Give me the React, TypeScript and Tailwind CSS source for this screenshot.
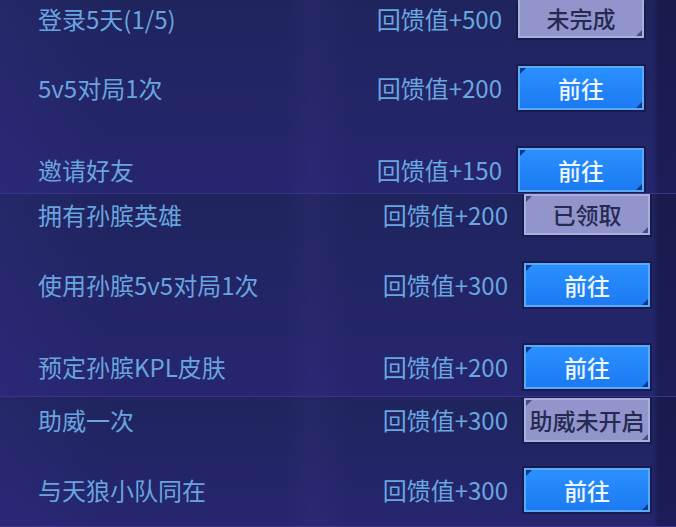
import React from 'react';

type Task = {
  label: string;
  reward: string;
  action: string;
  active: boolean;
  offset: string;
  size: string;
  cropTop?: boolean;
};

type Section = {
  height: string;
  rightPad: string;
  tasks: Task[];
};

const sections: Section[] = [
  {
    height: 'h-[194px]',
    rightPad: 'pr-[32px]',
    tasks: [
      { label: '登录5天(1/5)', reward: '回馈值+500', action: '未完成', active: false, offset: 'mt-0', size: 'h-[38px]', cropTop: true },
      { label: '5v5对局1次', reward: '回馈值+200', action: '前往', active: true, offset: 'mt-[28px]', size: 'h-[44px]' },
      { label: '邀请好友', reward: '回馈值+150', action: '前往', active: true, offset: 'mt-[38px]', size: 'h-[44px]' },
    ],
  },
  {
    height: 'h-[203px]',
    rightPad: 'pr-[26px]',
    tasks: [
      { label: '拥有孙膑英雄', reward: '回馈值+200', action: '已领取', active: false, offset: 'mt-0', size: 'h-[41px]' },
      { label: '使用孙膑5v5对局1次', reward: '回馈值+300', action: '前往', active: true, offset: 'mt-[28px]', size: 'h-[44px]' },
      { label: '预定孙膑KPL皮肤', reward: '回馈值+200', action: '前往', active: true, offset: 'mt-[38px]', size: 'h-[44px]' },
    ],
  },
  {
    height: 'h-[130px]',
    rightPad: 'pr-[26px]',
    tasks: [
      { label: '助威一次', reward: '回馈值+300', action: '助威未开启', active: false, offset: 'mt-[1px]', size: 'h-[44px]' },
      { label: '与天狼小队同在', reward: '回馈值+300', action: '前往', active: true, offset: 'mt-[26px]', size: 'h-[44px]' },
    ],
  },
];

function ActionButton({ text, active, size, cropTop }: { text: string; active: boolean; size: string; cropTop?: boolean }) {
  const tri = active ? 'border-t-[#0c3585]' : 'border-t-[#474c84]';
  const triB = active ? 'border-b-[#0c3585]' : 'border-b-[#474c84]';
  return (
    <div
      className={
        'relative flex w-[126px] shrink-0 items-center justify-center border-2 ' +
        size +
        ' ' +
        (cropTop ? 'border-t-0 shadow-[2px_2px_0_0_#171b4e,-2px_2px_0_0_#171b4e] ' : 'shadow-[0_0_0_2px_#171b4e] ') +
        (active
          ? 'border-[#5aaaf8] bg-[linear-gradient(180deg,#2a90ff,#1c7af2)] text-[#eef6ff]'
          : 'border-[#aab0dc] bg-[#9195cc] text-[#262a52]')
      }
    >
      {!cropTop && (
        <span className={'absolute left-0 top-0 h-0 w-0 border-r-[6px] border-t-[6px] border-r-transparent ' + tri} />
      )}
      <span className={'absolute bottom-0 right-0 h-0 w-0 border-b-[6px] border-l-[6px] border-l-transparent ' + triB} />
      <span className="whitespace-nowrap text-[23px] font-medium leading-none">{text}</span>
    </div>
  );
}

export default function App() {
  return (
    <div
      className="w-[676px] h-[527px] overflow-hidden bg-[#212461]"
      style={{ fontFamily: '"Noto Sans CJK SC", "Noto Sans", sans-serif' }}
    >
      {sections.map((s, i) => (
        <div
          key={i}
          className={
            'relative overflow-hidden border-b border-[#3a3488] bg-[linear-gradient(90deg,rgba(70,60,170,0.14)_0%,rgba(0,0,0,0)_16%,rgba(0,0,0,0)_42%,rgba(100,80,180,0.08)_46%,rgba(0,0,0,0)_52%,rgba(0,0,0,0)_96.5%,rgba(5,5,30,0.28)_97.5%),linear-gradient(180deg,#1f245d,#262670)] ' +
            s.height
          }
        >
          <div className="flex flex-col">
            {s.tasks.map((t) => (
              <div key={t.label} className={'flex items-center pl-[38px] ' + s.rightPad + ' ' + t.offset}>
                <div className="flex-1 whitespace-nowrap text-[24px] leading-none text-[#69a4df]">{t.label}</div>
                <div className="mr-[16px] whitespace-nowrap text-[24px] leading-none text-[#6aa6e0]">{t.reward}</div>
                <ActionButton text={t.action} active={t.active} size={t.size} cropTop={t.cropTop} />
              </div>
            ))}
          </div>
        </div>
      ))}
    </div>
  );
}
